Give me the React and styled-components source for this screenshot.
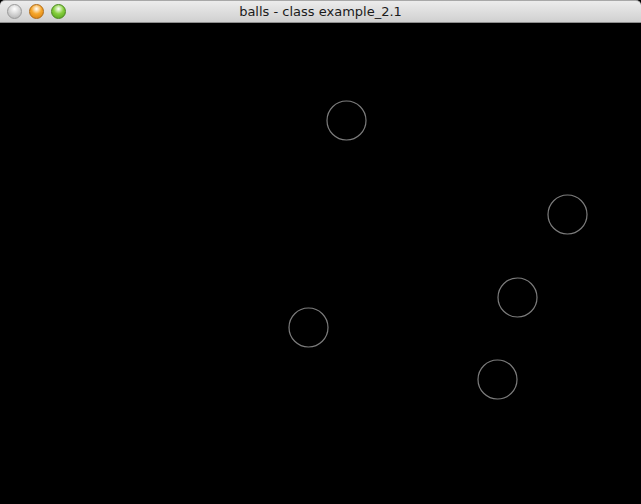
import React from 'react'
import styled, { createGlobalStyle } from 'styled-components'

const balls = [
  { x: 346.5, y: 97.5 },
  { x: 567.5, y: 191.5 },
  { x: 517.5, y: 274.5 },
  { x: 308.5, y: 304.5 },
  { x: 497.5, y: 356.5 },
]

const GlobalStyle = createGlobalStyle`
  html, body {
    margin: 0;
    padding: 0;
    background: #000;
  }
  body {
    font-family: "Lucida Grande", "DejaVu Sans", "Liberation Sans", sans-serif;
  }
`

const Window = styled.div`
  width: 641px;
  height: 504px;
  display: flex;
  flex-direction: column;
  overflow: hidden;
  background: #000;
`

const TitleBar = styled.div`
  height: 23px;
  flex: 0 0 23px;
  box-sizing: border-box;
  display: flex;
  align-items: center;
  padding: 0 0 0 7px;
  position: relative;
  border-top: 1px solid #a8a8a8;
  border-radius: 5px 5px 0 0;
  background: linear-gradient(#ececec, #d0d0d0);
  border-bottom: 1px solid #8e8e8e;
`

const Lights = styled.div`
  display: flex;
  gap: 7px;
`

const Light = styled.span`
  width: 15px;
  height: 15px;
  border-radius: 50%;
  box-sizing: border-box;
  border: 1px solid ${p => p.$edge};
  background: radial-gradient(circle at 50% 30%, #fff 0, ${p => p.$mid} 45%, ${p => p.$dark} 100%);
`

const Title = styled.div`
  position: absolute;
  left: 0;
  right: 0;
  top: 3px;
  text-align: center;
  font-size: 13px;
  color: #1a1a1a;
  pointer-events: none;
`

const Canvas = styled.svg`
  display: block;
  flex: 1;
  background: #000;
`

export default function App() {
  return (
    <>
      <GlobalStyle />
      <Window>
        <TitleBar>
          <Lights>
            <Light $edge="#9a9a9a" $mid="#d8d8d8" $dark="#a9a9a9" />
            <Light $edge="#b26a12" $mid="#f6a72c" $dark="#d27a10" />
            <Light $edge="#4a8a1c" $mid="#86cf3c" $dark="#4f9c1c" />
          </Lights>
          <Title>balls - class example_2.1</Title>
        </TitleBar>
        <Canvas width="641" height="481">
          {balls.map((b, i) => (
            <circle key={i} cx={b.x} cy={b.y} r="19.5" fill="none" stroke="#7c7c7c" strokeWidth="1.2" />
          ))}
        </Canvas>
      </Window>
    </>
  )
}
